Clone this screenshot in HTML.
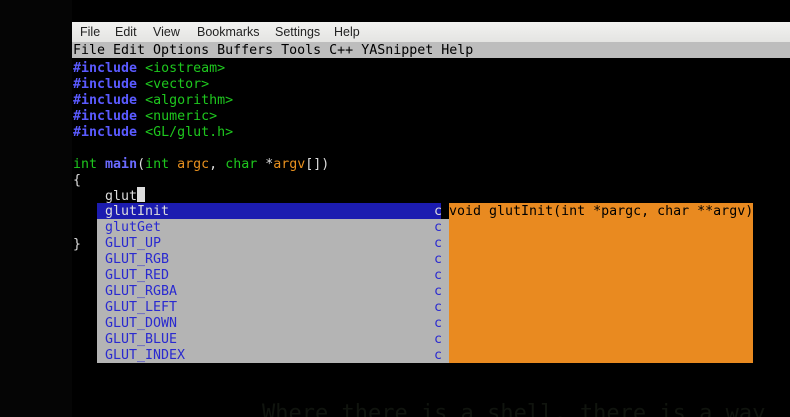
<!DOCTYPE html>
<html><head><meta charset="utf-8"><style>
html,body{margin:0;padding:0;width:790px;height:417px;overflow:hidden;background:#000;}
body{position:relative;font-family:"DejaVu Sans Mono","Liberation Mono",monospace;font-size:13.3px;}
.abs{position:absolute;}
.line{position:absolute;left:73px;height:16px;line-height:16px;padding-top:2px;white-space:pre;color:#ddd;}
.kw{color:#5a5aff;font-weight:bold}
.str{color:#1ec81e}
.ty{color:#1ec81e}
.fn{color:#6a6aff;font-weight:bold}
.var{color:#e8901e}
.row{position:absolute;left:97px;width:352px;height:16px;line-height:18px;white-space:pre;color:#2a2ad0;background:#b4b4b4;}
.row span{position:absolute;left:8px;}
.row b{position:absolute;left:337px;font-weight:normal;}
</style></head><body>
<div class="abs" style="left:0;top:0;width:72px;height:417px;background:#050505"></div>
<div class="abs" style="left:72px;top:22px;width:718px;height:20px;background:linear-gradient(#f2f2f0,#e4e4e2);font-family:'Liberation Sans',sans-serif;font-size:12.5px;line-height:20px;color:#222;">
<span class="abs" style="left:8px">File</span><span class="abs" style="left:43px">Edit</span><span class="abs" style="left:81px">View</span><span class="abs" style="left:125px">Bookmarks</span><span class="abs" style="left:203px">Settings</span><span class="abs" style="left:262px">Help</span></div>
<div class="abs" style="left:72px;top:42px;width:718px;height:16px;background:#bdbdbd;"></div>
<div class="line" style="top:41px;color:#000">File Edit Options Buffers Tools C++ YASnippet Help</div>
<div class="line" style="top:59px"><span class="kw">#include</span> <span class="str">&lt;iostream&gt;</span></div>
<div class="line" style="top:75px"><span class="kw">#include</span> <span class="str">&lt;vector&gt;</span></div>
<div class="line" style="top:91px"><span class="kw">#include</span> <span class="str">&lt;algorithm&gt;</span></div>
<div class="line" style="top:107px"><span class="kw">#include</span> <span class="str">&lt;numeric&gt;</span></div>
<div class="line" style="top:123px"><span class="kw">#include</span> <span class="str">&lt;GL/glut.h&gt;</span></div>
<div class="line" style="top:155px"><span class="ty">int</span> <span class="fn">main</span>(<span class="ty">int</span> <span class="var">argc</span>, <span class="ty">char</span> *<span class="var">argv</span>[])</div>
<div class="line" style="top:171px">{</div>
<div class="line" style="top:187px">    glut</div>
<div class="abs" style="left:137px;top:187px;width:8px;height:15px;background:#ddd"></div>
<div class="line" style="top:235px">}</div>
<div class="abs" style="left:449px;top:203px;width:304px;height:160px;background:#e98a20"></div>
<div class="row" style="top:203px;width:344px;background:#1c1cb0;color:#ddd"><span>glutInit</span><b>c</b></div>
<div class="abs" style="left:449px;top:203px;height:16px;line-height:18px;white-space:pre;color:#000">void glutInit(int *pargc, char **argv)</div>
<div class="row" style="top:219px"><span>glutGet</span><b>c</b></div>
<div class="row" style="top:235px"><span>GLUT_UP</span><b>c</b></div>
<div class="row" style="top:251px"><span>GLUT_RGB</span><b>c</b></div>
<div class="row" style="top:267px"><span>GLUT_RED</span><b>c</b></div>
<div class="row" style="top:283px"><span>GLUT_RGBA</span><b>c</b></div>
<div class="row" style="top:299px"><span>GLUT_LEFT</span><b>c</b></div>
<div class="row" style="top:315px"><span>GLUT_DOWN</span><b>c</b></div>
<div class="row" style="top:331px"><span>GLUT_BLUE</span><b>c</b></div>
<div class="row" style="top:347px"><span>GLUT_INDEX</span><b>c</b></div>
<div class="abs" style="left:262px;top:401px;font-size:22px;color:#10140e;white-space:pre">Where there is a shell, there is a way</div>
</body></html>
